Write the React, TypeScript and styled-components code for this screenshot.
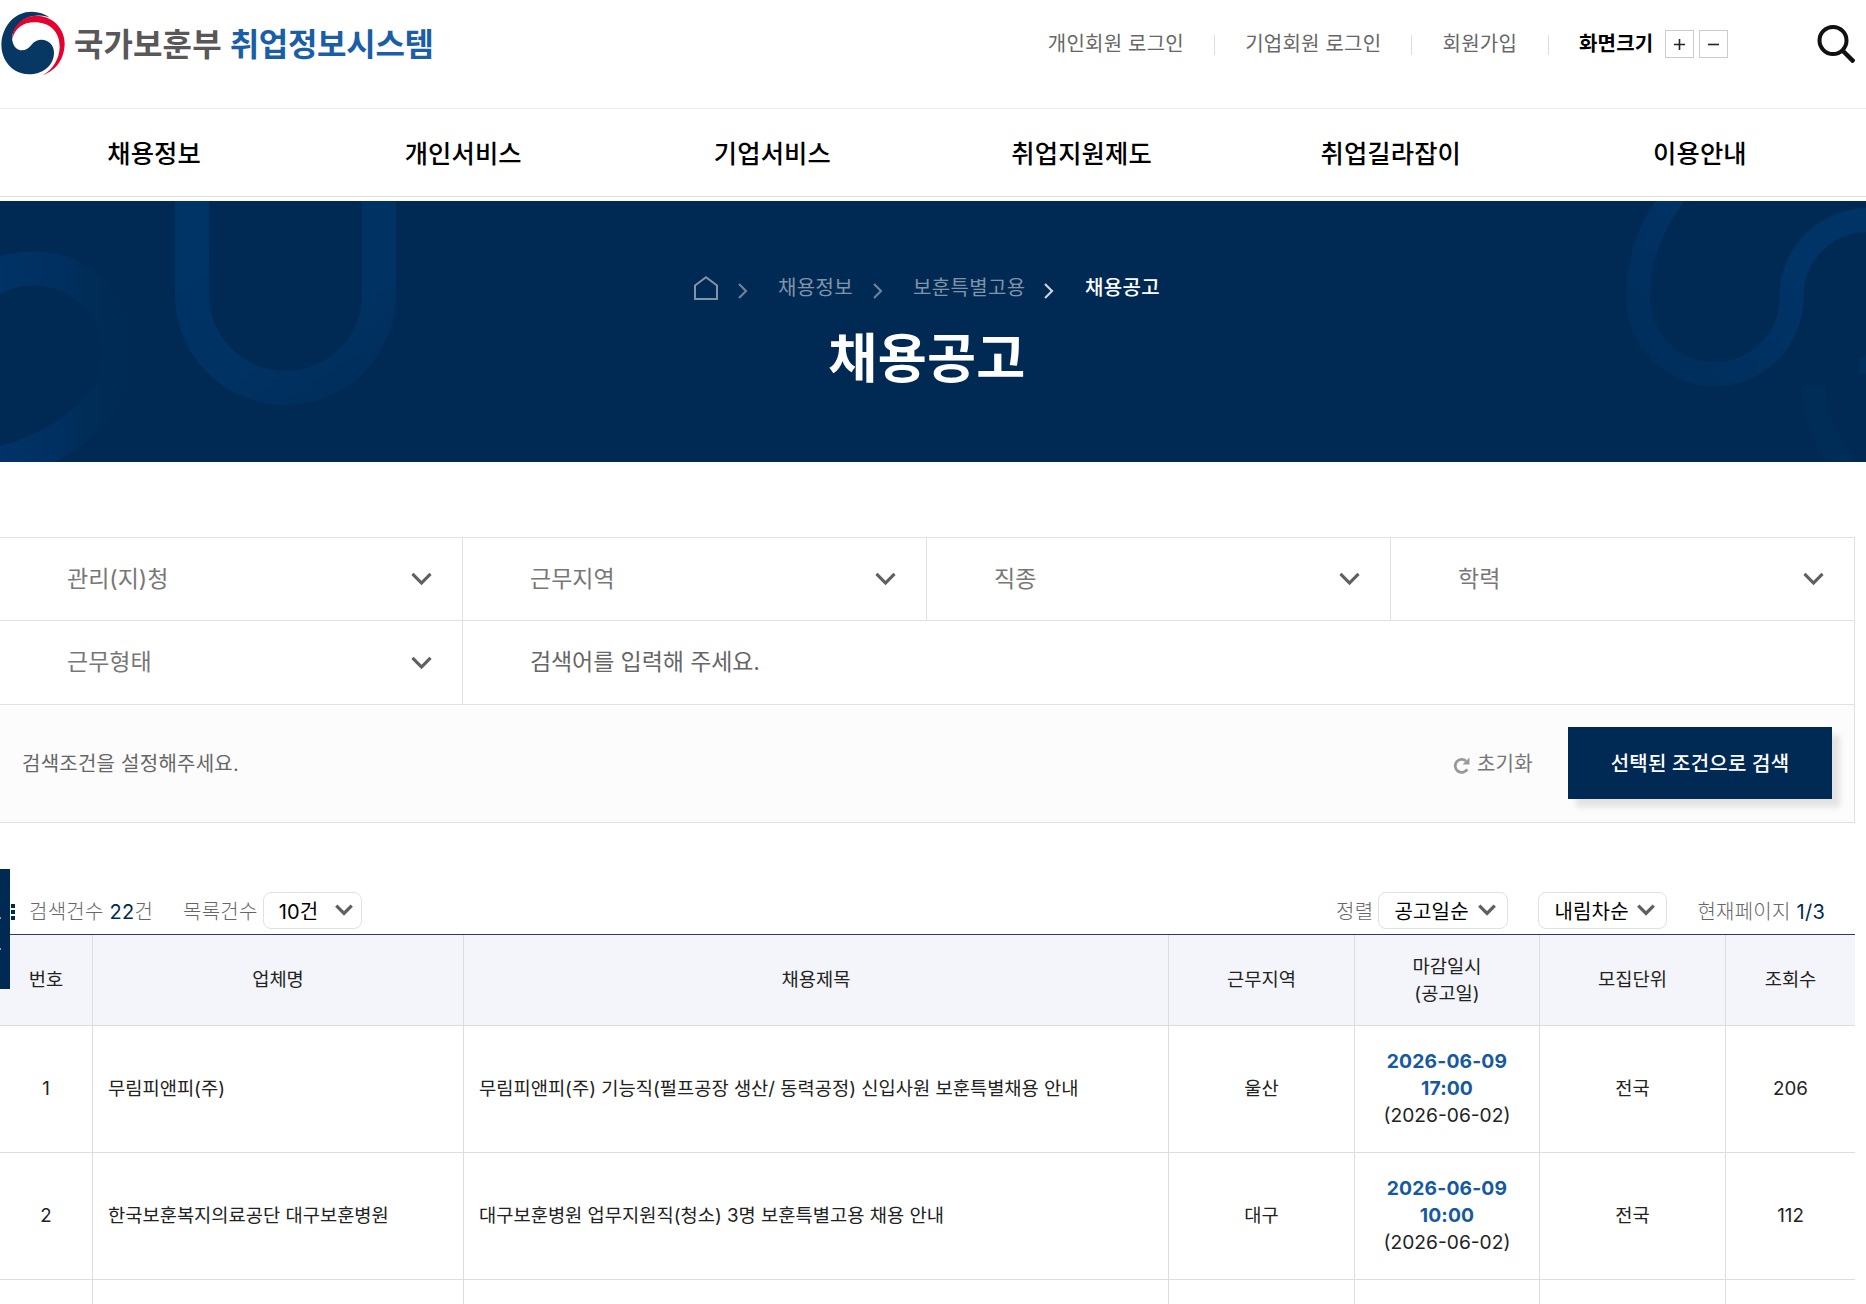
import React from 'react';
import styled, { createGlobalStyle } from 'styled-components';

const GlobalStyle = createGlobalStyle`
  *, *::before, *::after { box-sizing: border-box; }
  html, body { margin: 0; padding: 0; }
  body {
    height: 1304px;
    overflow: hidden;
    background: #fff;
    color: #222;
    font-family: Inter, "Noto Sans CJK KR", sans-serif;
    font-size: 20px;
    line-height: 1.4;
  }
  button { font: inherit; border: 0; background: none; padding: 0; color: inherit; }
  ul { list-style: none; margin: 0; padding: 0; }
`;

const Page = styled.div`
  position: relative;
  width: 1866px;
  height: 1304px;
  overflow: hidden;
`;

const TopBar = styled.header`
  display: flex;
  justify-content: space-between;
  height: 109px;
  padding-right: 11px;
  border-bottom: 1px solid #ebebeb;
`;

const Brand = styled.a`
  display: flex;
  align-items: flex-start;
  padding: 11px 0 0 0;
`;

const BrandText = styled.span<{ $tone: string; $gap: number; $spacing: number }>`
  margin: 9px 0 0 ${(p) => p.$gap}px;
  font-family: "Noto Sans CJK KR", sans-serif;
  font-size: 32px;
  line-height: 44px;
  font-weight: 700;
  letter-spacing: ${(p) => p.$spacing}px;
  white-space: nowrap;
  color: ${(p) => p.$tone};
`;

const Utility = styled.div`
  display: flex;
  align-items: flex-start;
  padding-top: 25px;
`;

const UtilLink = styled.a<{ $width: number }>`
  width: ${(p) => p.$width}px;
  margin-right: 31px;
  padding-top: 5px;
  line-height: 28px;
  font-size: 20px;
  letter-spacing: 0.2px;
  white-space: nowrap;
  color: #666;
`;

const UtilDivider = styled.i`
  width: 1px;
  height: 20px;
  margin: 10px 30.4px 0 0;
  background: #ddd;
`;

const SizeLabel = styled.strong`
  width: 86px;
  padding-top: 5px;
  line-height: 28px;
  font-weight: 700;
  letter-spacing: 0.2px;
  white-space: nowrap;
  color: #000;
`;

const SizeButton = styled.button`
  display: flex;
  align-items: center;
  justify-content: center;
  width: 29px;
  height: 28px;
  margin: 5px 5px 0 0;
  border: 1px solid #ccc;
  background: #fff;
`;

const SearchButton = styled.button`
  display: block;
  width: 38px;
  height: 38px;
  margin-left: 84px;
`;

const MainNav = styled.nav`
  height: 88px;
  border-bottom: 1px solid #ddd;
`;

const NavList = styled.ul`
  display: grid;
  grid-template-columns: repeat(6, 1fr);
  width: 1855px;
`;

const NavItem = styled.li`
  height: 87px;
  padding-right: 1px;
  line-height: 89px;
  text-align: center;
  font-size: 25.3px;
  font-weight: 500;
  letter-spacing: 0.15px;
  color: #000;
`;

const Banner = styled.section`
  position: relative;
  height: 261px;
  margin-top: 4px;
  background: #002a53;
`;

const BannerArt = styled.svg`
  position: absolute;
  inset: 0;
  width: 1866px;
  height: 261px;
`;

const BannerContent = styled.div`
  position: relative;
  width: 1855px;
  padding-top: 69px;
`;

const Crumbs = styled.ul`
  display: flex;
  align-items: flex-start;
  padding-left: 694px;
  height: 36px;
`;

const Crumb = styled.li<{ $current?: boolean; $width: number }>`
  display: flex;
  width: ${(p) => p.$width}px;
  line-height: 36px;
  letter-spacing: 0.35px;
  white-space: nowrap;
  font-weight: ${(p) => (p.$current ? 500 : 400)};
  color: ${(p) => (p.$current ? '#fff' : '#8094a9')};
`;

const CrumbArrow = styled.svg`
  flex: none;
  margin-top: 13px;
`;

const HomeMark = styled.svg`
  flex: none;
  margin: 6px 20px 0 0;
`;

const BannerTitle = styled.h1`
  margin: 19px 0 0;
  padding-right: 1px;
  text-align: center;
  font-size: 53.3px;
  line-height: 68px;
  font-weight: 700;
  letter-spacing: 0.3px;
  color: #fff;
`;

const FilterBox = styled.section`
  width: 1855px;
  margin-top: 75px;
  border-top: 1px solid #e1e1e1;
  border-right: 1px solid #e1e1e1;
  border-bottom: 1px solid #e1e1e1;
`;

const FilterRow = styled.div<{ $columns: string; $height: number }>`
  display: grid;
  grid-template-columns: ${(p) => p.$columns};
  height: ${(p) => p.$height}px;
  border-bottom: 1px solid #e1e1e1;
`;

const FilterCell = styled.div<{ $dark?: boolean }>`
  display: flex;
  align-items: center;
  justify-content: space-between;
  padding: 0 30px 0 67px;
  border-right: 1px solid #e1e1e1;
  font-size: 23px;
  letter-spacing: ${(p) => (p.$dark ? '-0.1px' : '0')};
  color: ${(p) => (p.$dark ? '#666' : '#777')};
  &:last-child { border-right: 0; }
`;

const FilterFoot = styled.div`
  display: flex;
  align-items: center;
  height: 117px;
  padding: 0 22px 2px;
  background: #fcfcfc;
`;

const FilterHint = styled.span`
  flex: 1;
  padding-top: 3px;
  letter-spacing: 0.25px;
  color: #666;
`;

const ResetButton = styled.button`
  display: flex;
  align-items: center;
  gap: 7px;
  margin-right: 35px;
  padding-top: 3px;
  letter-spacing: 0.3px;
  color: #777;
  svg { margin-top: 3px; }
`;

const SubmitButton = styled.button`
  width: 264px;
  height: 72px;
  background: #002a53;
  box-shadow: 8px 8px 6px rgba(0, 0, 0, 0.1);
  padding-top: 3px;
  letter-spacing: 0.2px;
  font-weight: 500;
  color: #fff;
`;

const ListBar = styled.div`
  display: flex;
  align-items: center;
  width: 1855px;
  height: 37px;
  margin-top: 69px;
  padding-right: 30px;
  color: #666;
`;

const BarText = styled.span<{ $left?: number }>`
  margin-left: ${(p) => p.$left ?? 0}px;
  padding-top: 3px;
  font-weight: 300;
  letter-spacing: 0.25px;
  white-space: nowrap;
  b { font-weight: 400; color: #002a53; }
`;

const BarSpacer = styled.span`
  flex: 1;
`;

const SelectBox = styled.div<{ $width: number; $left: number; $end?: number }>`
  display: flex;
  align-items: center;
  justify-content: space-between;
  width: ${(p) => p.$width}px;
  height: 37px;
  margin-left: ${(p) => p.$left}px;
  padding: 2px ${(p) => p.$end ?? 10}px 0 15px;
  border: 1px solid #e1e1e1;
  border-radius: 8px;
  letter-spacing: 0.2px;
  white-space: nowrap;
  color: #000;
  svg { margin: 0 1px 4px 0; }
`;

const MenuMark = styled.svg`
  flex: none;
  margin: 3px 0 0 11px;
`;

const Table = styled.table`
  width: 1855px;
  margin-top: 5px;
  table-layout: fixed;
  border-collapse: separate;
  border-spacing: 0;
  border-top: 1px solid #2c3a63;
  font-size: 18.73px;
  line-height: 27px;
`;

const HeadCell = styled.th<{ $low?: boolean }>`
  height: 91px;
  padding: 0 0 ${(p) => (p.$low ? 0 : 2)}px;
  background: #f4f5fa;
  border-right: 1px solid #ddd;
  border-bottom: 1px solid #ddd;
  font-weight: 400;
  color: #222;
  &:last-child { border-right: 0; }
`;

const Cell = styled.td<{ $left?: boolean }>`
  height: 127px;
  padding: 0 15px 2px;
  text-align: ${(p) => (p.$left ? 'left' : 'center')};
  border-right: 1px solid #ddd;
  border-bottom: 1px solid #ddd;
  white-space: nowrap;
  color: #222;
  &:last-child { border-right: 0; }
`;

const Deadline = styled.strong`
  display: block;
  font-size: 19.3px;
  letter-spacing: 0.15px;
  font-weight: 700;
  color: #155a9f;
`;

const Posted = styled.span`
  font-size: 19.2px;
`;

const SideTab = styled.aside`
  position: absolute;
  left: 0;
  top: 869px;
  width: 10px;
  height: 120px;
  padding-top: 48px;
  background: #002a53;
`;

const SideTick = styled.i`
  display: block;
  width: 1px;
  height: 2px;
  margin-bottom: 29px;
  background: #8c9fb3;
`;

const Emblem = () => (
  <svg width="66" height="66" viewBox="1 33 198 198">
    <path fill="#073763" d="M152 54C116 27 62 28 30 66C-8 112 -2 180 45 211C90 238 162 217 163 158C163 120 118 106 95 135C78 158 45 158 38 122C33 95 60 55 100 48C120 44 140 47 152 54Z" />
    <path fill="#e4032e" d="M38 118C36 80 70 47 110 47C155 47 195 82 195 130C195 180 165 214 130 225C160 208 180 175 180 140C180 95 150 67 105 67C70 67 45 85 38 118Z" />
  </svg>
);

const Magnifier = () => (
  <svg width="38" height="38" viewBox="0 0 38 38" fill="none" stroke="#111" strokeWidth="4">
    <circle cx="16" cy="15.500" r="13.500" />
    <path d="M25.500 25.500L37 37" strokeWidth="4.500" />
  </svg>
);

const Chevron = ({ width = 21, weight = 3.2 }: { width?: number; weight?: number }) => (
  <svg width={width} height={width * 0.667} viewBox="0 0 21 14" fill="none" stroke="#606060" strokeWidth={weight}>
    <path d="M1.500 1.800L10.500 11L19.500 1.800" />
  </svg>
);

const Arrow = ({ tone }: { tone: string }) => (
  <CrumbArrow width="10" height="16" viewBox="0 0 10 16" fill="none" stroke={tone} strokeWidth="2.200">
    <path d="M1 1L8 8L1 15" />
  </CrumbArrow>
);

const navItems = ['채용정보', '개인서비스', '기업서비스', '취업지원제도', '취업길라잡이', '이용안내'];
const columns = [93, 371, 705, 186, 185, 186, 129];
const jobs = [
  { no: 1, company: '무림피앤피(주)', title: '무림피앤피(주) 기능직(펄프공장 생산/ 동력공정) 신입사원 보훈특별채용 안내', area: '울산', date: '2026-06-09', time: '17:00', posted: '(2026-06-02)', unit: '전국', views: 206 },
  { no: 2, company: '한국보훈복지의료공단 대구보훈병원', title: '대구보훈병원 업무지원직(청소) 3명 보훈특별고용 채용 안내', area: '대구', date: '2026-06-09', time: '10:00', posted: '(2026-06-02)', unit: '전국', views: 112 },
];

export default function App() {
  return (
    <Page>
      <GlobalStyle />
      <TopBar>
        <Brand>
          <Emblem />
          <BrandText $tone="#595757" $gap={8} $spacing={0.1}>국가보훈부</BrandText>
          <BrandText $tone="#1a5ea6" $gap={8} $spacing={-0.3}>취업정보시스템</BrandText>
        </Brand>
        <Utility>
          <UtilLink $width={135}>개인회원 로그인</UtilLink>
          <UtilDivider />
          <UtilLink $width={135}>기업회원 로그인</UtilLink>
          <UtilDivider />
          <UtilLink $width={74}>회원가입</UtilLink>
          <UtilDivider />
          <SizeLabel>화면크기</SizeLabel>
          <SizeButton aria-label="확대">
            <svg width="11" height="11" viewBox="0 0 11 11" stroke="#222" strokeWidth="1.600"><path d="M5.500 0V11M0 5.500H11" /></svg>
          </SizeButton>
          <SizeButton aria-label="축소">
            <svg width="11" height="11" viewBox="0 0 11 11" stroke="#222" strokeWidth="1.600"><path d="M0 5.500H11" /></svg>
          </SizeButton>
          <SearchButton aria-label="검색"><Magnifier /></SearchButton>
        </Utility>
      </TopBar>
      <MainNav>
        <NavList>{navItems.map((n) => <NavItem key={n}>{n}</NavItem>)}</NavList>
      </MainNav>
      <Banner>
        <BannerArt viewBox="0 201 1866 261" fill="none">
          <defs>
            <linearGradient id="ring" gradientUnits="userSpaceOnUse" x1="0" y1="0" x2="137" y2="0">
              <stop offset="0" stopColor="#003366" />
              <stop offset="0.500" stopColor="#002f5f" />
              <stop offset="0.620" stopColor="#002d58" />
              <stop offset="0.800" stopColor="#002b55" />
              <stop offset="1" stopColor="#002a53" />
            </linearGradient>
            <linearGradient id="arch" gradientUnits="userSpaceOnUse" x1="230" y1="230" x2="350" y2="420">
              <stop offset="0" stopColor="#003366" />
              <stop offset="0.550" stopColor="#003263" />
              <stop offset="1" stopColor="#002d59" />
            </linearGradient>
            <linearGradient id="wave" gradientUnits="userSpaceOnUse" x1="1780" y1="270" x2="1660" y2="380">
              <stop offset="0" stopColor="#003366" />
              <stop offset="1" stopColor="#002e5b" />
            </linearGradient>
          </defs>
          <path stroke="url(#ring)" strokeWidth="34" d="M-20 286C-4 274 14 268.500 34 268.500A86 86 0 0 1 120 354C118 414 50 456 -20 468" />
          <path stroke="url(#arch)" strokeWidth="34" d="M192 190V294.500A93.500 93.500 0 0 0 379 294.500V190" />
          <path stroke="url(#wave)" strokeWidth="24" d="M1690 176C1652 218 1638 255 1638 297.500A76.700 76.700 0 0 0 1791.400 297.500A76.700 76.700 0 0 1 1868 220" />
          <path stroke="#002d58" strokeWidth="24" d="M1814 386C1814 418 1826 444 1848 472" />
          <path fill="#002f5d" d="M1859 357H1866V373H1859Z" />
        </BannerArt>
        <BannerContent>
          <Crumbs>
            <Crumb $width={84}>
              <HomeMark width="24" height="24" viewBox="0 0 24 24" fill="none" stroke="#8094a9" strokeWidth="2">
                <path d="M1 23V9.500L12 1.300L23 9.500V23Z" />
              </HomeMark>
              <Arrow tone="#6b829b" />
            </Crumb>
            <Crumb $width={95}>채용정보</Crumb>
            <Crumb $width={40}><Arrow tone="#6b829b" /></Crumb>
            <Crumb $width={131}>보훈특별고용</Crumb>
            <Crumb $width={41}><Arrow tone="#cbd3dc" /></Crumb>
            <Crumb $width={80} $current>채용공고</Crumb>
          </Crumbs>
          <BannerTitle>채용공고</BannerTitle>
        </BannerContent>
      </Banner>
      <FilterBox>
        <FilterRow $columns="463px 464px 464px 1fr" $height={83}>
          {['관리(지)청', '근무지역', '직종', '학력'].map((f) => (
            <FilterCell key={f}>{f}<Chevron /></FilterCell>
          ))}
        </FilterRow>
        <FilterRow $columns="463px 1fr" $height={84}>
          <FilterCell>근무형태<Chevron /></FilterCell>
          <FilterCell $dark>검색어를 입력해 주세요.</FilterCell>
        </FilterRow>
        <FilterFoot>
          <FilterHint>검색조건을 설정해주세요.</FilterHint>
          <ResetButton>
            <svg width="17" height="17" viewBox="0 0 17 17" fill="none" stroke="#999" strokeWidth="2.800">
              <path d="M14.300 12.300A6.500 6.500 0 1 1 13 4" />
              <path fill="#999" stroke="none" d="M16.500 0.500V7.500H9.500Z" />
            </svg>
            초기화
          </ResetButton>
          <SubmitButton>선택된 조건으로 검색</SubmitButton>
        </FilterFoot>
      </FilterBox>
      <ListBar>
        <MenuMark width="4" height="16" viewBox="0 0 4 16" fill="#002a53">
          <path d="M0 0H4V4H0ZM0 6H4V10H0ZM0 12H4V16H0Z" />
        </MenuMark>
        <BarText $left={14}>검색건수 <b>22</b>건</BarText>
        <BarText $left={30}>목록건수</BarText>
        <SelectBox $width={99} $left={5} $end={7}>10건<Chevron width={18} weight={3.8} /></SelectBox>
        <BarSpacer />
        <BarText>정렬</BarText>
        <SelectBox $width={130} $left={5}>공고일순<Chevron width={18} weight={3.8} /></SelectBox>
        <SelectBox $width={129} $left={30}>내림차순<Chevron width={18} weight={3.8} /></SelectBox>
        <BarText $left={30}>현재페이지 <b>1/3</b></BarText>
      </ListBar>
      <Table>
        <colgroup>{columns.map((w, i) => <col key={i} width={w} />)}</colgroup>
        <thead>
          <tr>
            <HeadCell>번호</HeadCell>
            <HeadCell>업체명</HeadCell>
            <HeadCell>채용제목</HeadCell>
            <HeadCell>근무지역</HeadCell>
            <HeadCell $low>마감일시<br />(공고일)</HeadCell>
            <HeadCell>모집단위</HeadCell>
            <HeadCell>조회수</HeadCell>
          </tr>
        </thead>
        <tbody>
          {jobs.map((j) => (
            <tr key={j.no}>
              <Cell>{j.no}</Cell>
              <Cell $left>{j.company}</Cell>
              <Cell $left>{j.title}</Cell>
              <Cell>{j.area}</Cell>
              <Cell>
                <Deadline>{j.date}<br />{j.time}</Deadline>
                <Posted>{j.posted}</Posted>
              </Cell>
              <Cell>{j.unit}</Cell>
              <Cell>{j.views}</Cell>
            </tr>
          ))}
          <tr>{columns.map((_, i) => <Cell key={i} />)}</tr>
        </tbody>
      </Table>
      <SideTab><SideTick /><SideTick /></SideTab>
    </Page>
  );
}
